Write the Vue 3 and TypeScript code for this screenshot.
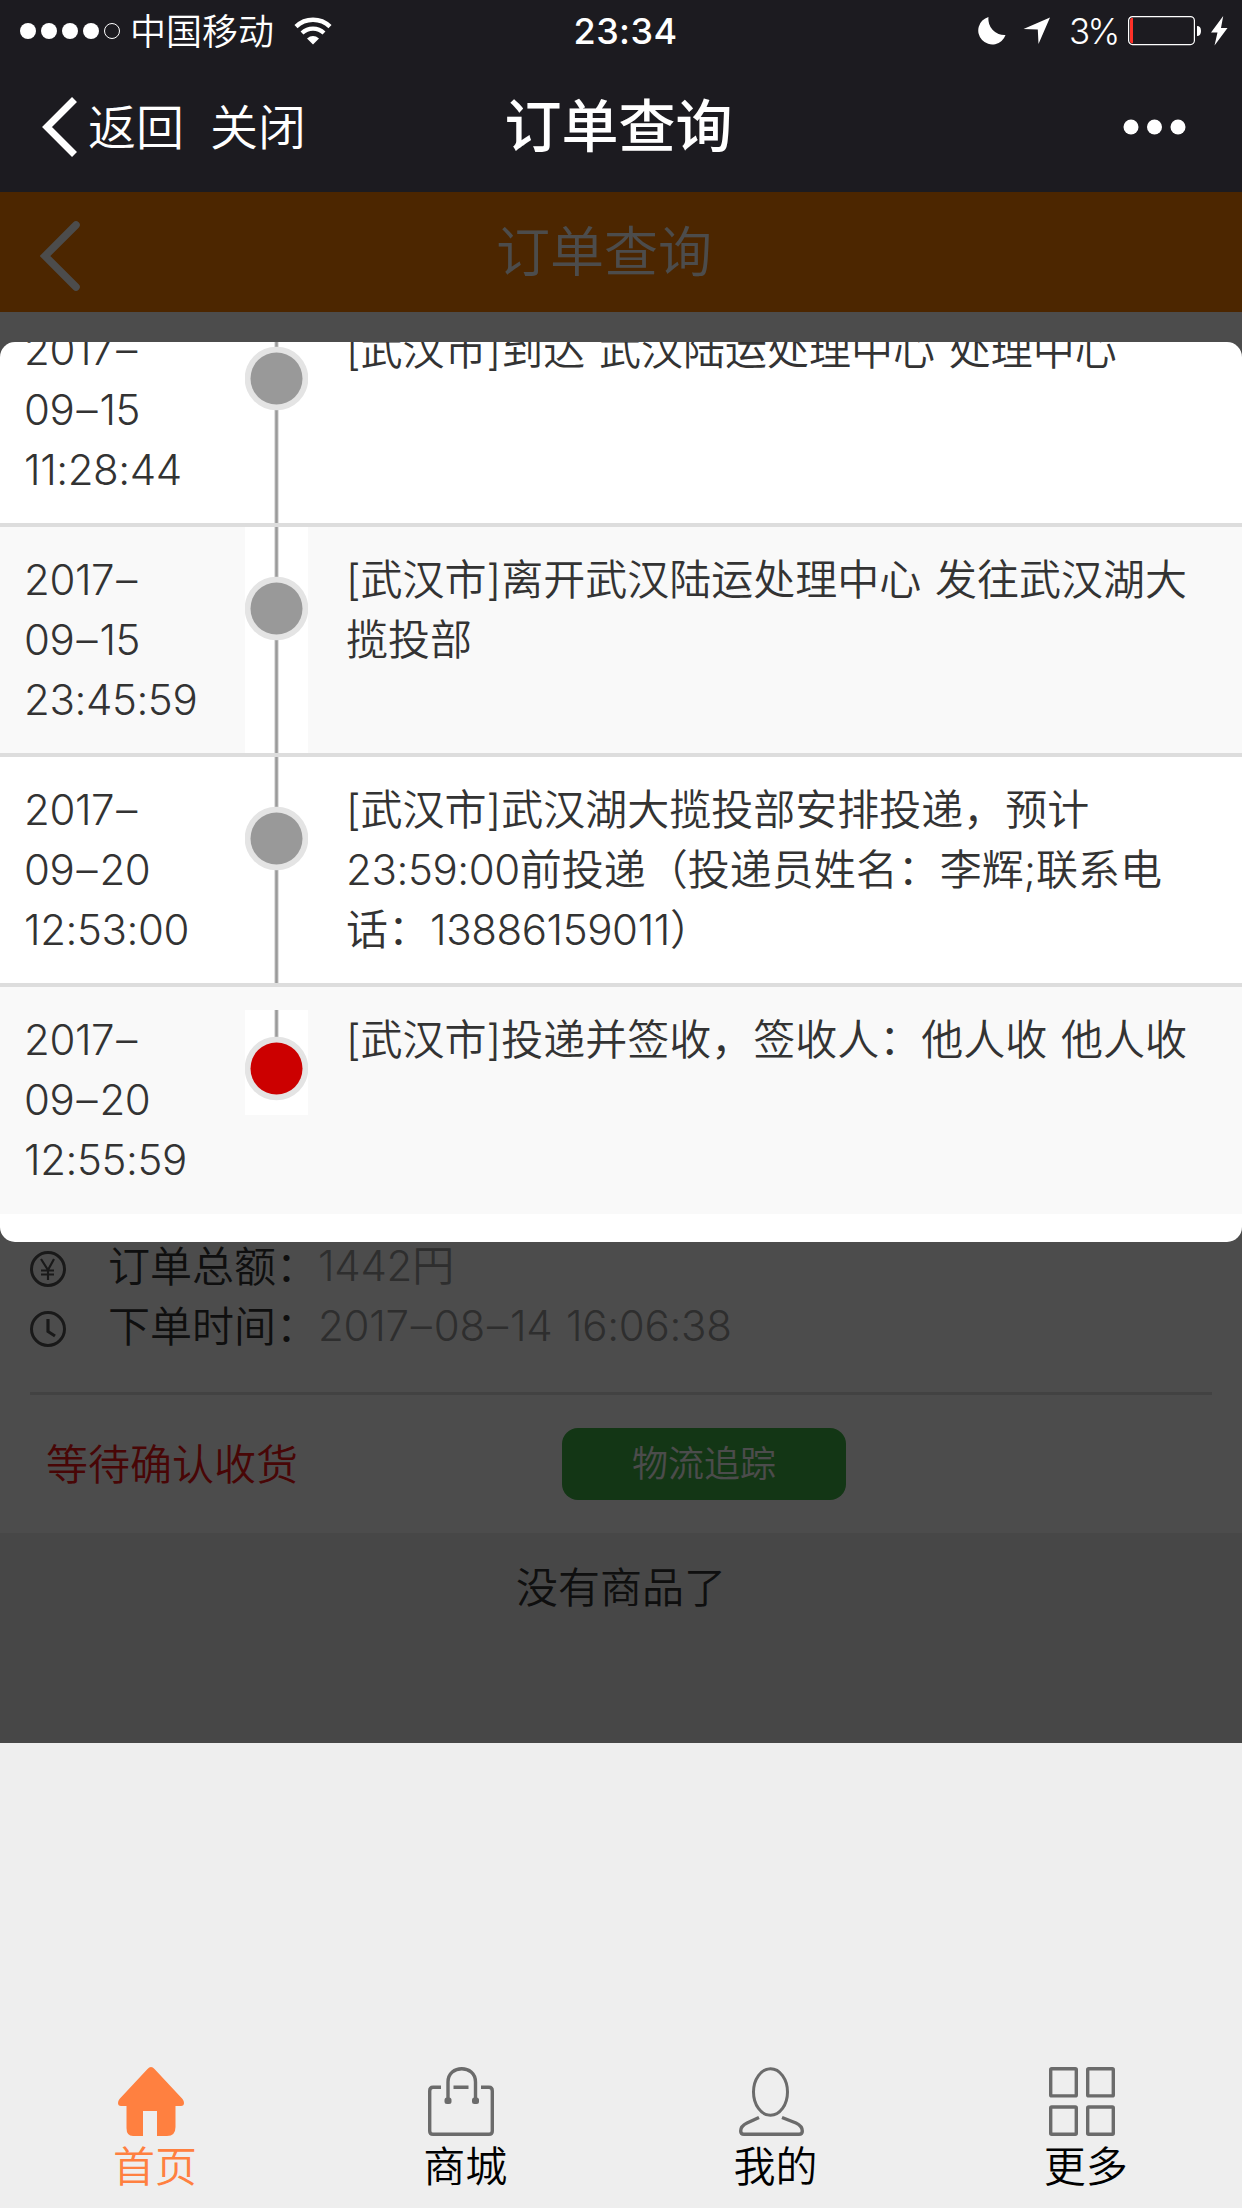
<script setup lang="ts">
interface TrackEntry {
  time: string[]
  lines: string[]
  current?: boolean
}

interface Segment {
  text: string
  kind: 'num' | 'dash' | 'plain'
}

const entries: TrackEntry[] = [
  { time: ['2017–', '09–15', '11:28:44'], lines: ['[武汉市]到达 武汉陆运处理中心 处理中心'] },
  { time: ['2017–', '09–15', '23:45:59'], lines: ['[武汉市]离开武汉陆运处理中心 发往武汉湖大', '揽投部'] },
  {
    time: ['2017–', '09–20', '12:53:00'],
    lines: ['[武汉市]武汉湖大揽投部安排投递，预计', '23:59:00前投递（投递员姓名：李辉;联系电', '话：13886159011）'],
  },
  { time: ['2017–', '09–20', '12:55:59'], lines: ['[武汉市]投递并签收，签收人：他人收 他人收'], current: true },
]

const orderTime = '2017–08–14 16:06:38'

const tabs = [
  { id: 'home', label: '首页' },
  { id: 'mall', label: '商城' },
  { id: 'mine', label: '我的' },
  { id: 'more', label: '更多' },
]

// Digits and dashes are spaced differently from the surrounding Chinese text
function segments(line: string): Segment[] {
  return line
    .split(/([0-9: ]*[0-9:]+|–)/)
    .filter((part) => part.length > 0)
    .map((part) => ({
      text: part,
      kind: part === '–' ? 'dash' : /^[0-9: ]+$/.test(part) ? 'num' : 'plain',
    }))
}
</script>

<template>
  <div class="screen">
    <header class="top">
      <div class="status">
        <div class="status-left">
          <svg class="signal" width="100" height="16" viewBox="0 0 100 16">
            <circle v-for="n in 4" :key="n" :cx="n * 21 - 13" cy="8" r="8" fill="#fff" />
            <circle cx="92" cy="8" r="7.5" fill="none" stroke="#fff" />
          </svg>
          <span class="carrier">中国移动</span>
          <svg class="wifi" width="38" height="28" viewBox="0 0 38 28">
            <path d="M2 9.6a24.5 24.5 0 0 1 34 0" fill="none" stroke="#fff" stroke-width="4.4" />
            <path d="M8 16a16 16 0 0 1 22 0" fill="none" stroke="#fff" stroke-width="4.2" />
            <path d="M13 21.400q6-4.600 12 0l-6 6z" fill="#fff" />
          </svg>
        </div>
        <span class="clock">23:34</span>
        <div class="status-right">
          <svg width="28" height="28" viewBox="0 0 28 28">
            <path d="M10.500 0A14 14 0 1 0 27.500 18A16 16 0 0 1 10.500 0z" fill="#fff" />
          </svg>
          <svg class="locate" width="28" height="28" viewBox="0 0 28 28">
            <path d="M27 .5L15.500 27 14.800 12.500.5 12z" fill="#fff" />
          </svg>
          <span class="percent">3%</span>
          <svg class="battery" width="74" height="30" viewBox="0 0 74 30">
            <rect x=".6" y=".6" width="65.800" height="28" rx="4" fill="none" stroke="#fff" stroke-width="1.200" />
            <path d="M5 2v25.200H3.500Q2 27.200 2 25V4.500Q2 2 3.500 2z" fill="#ff3128" />
            <path d="M69 10q4 0 4 5t-4 5z" fill="#fff" />
          </svg>
          <svg class="bolt" width="17" height="30" viewBox="0 0 17 30">
            <path d="M12.200 0L0 16.500h6.500L3.500 29.500 16.500 12H10z" fill="#fff" />
          </svg>
        </div>
      </div>
      <nav class="nav">
        <div class="nav-side">
          <svg width="36" height="60" viewBox="0 0 36 60">
            <path d="M32.500 2.500L5 30l27.500 27.500" fill="none" stroke="#fff" stroke-width="7" />
          </svg>
          <span class="nav-back">返回</span>
          <span class="nav-close">关闭</span>
        </div>
        <h1 class="nav-title">订单查询</h1>
        <svg class="dots" width="64" height="16" viewBox="0 0 64 16">
          <circle cx="8" cy="8" r="7.500" fill="#fff" />
          <circle cx="31.500" cy="8" r="7.500" fill="#fff" />
          <circle cx="55" cy="8" r="7.500" fill="#fff" />
        </svg>
      </nav>
    </header>

    <main class="page">
      <div class="bar">
        <svg width="40" height="72" viewBox="0 0 40 72">
          <path d="M36 5L5 36l31 31" fill="none" stroke="#fff" stroke-width="7.500" stroke-linecap="round" />
        </svg>
        <h2 class="bar-title">订单查询</h2>
      </div>
      <section class="order">
        <div class="info">
          <svg width="36" height="36" viewBox="0 0 36 36" fill="none" stroke="#555" stroke-width="3">
            <circle cx="18" cy="18" r="16.500" />
            <path d="M11 8l7 11 6-11M18 18v11M11 19.500h13M11 23.500h13" stroke-width="2.200" />
          </svg>
          <span class="info-label">订单总额：</span>
          <span class="info-value"><span class="num">1442</span>円</span>
        </div>
        <div class="info">
          <svg width="36" height="36" viewBox="0 0 36 36" fill="none" stroke="#555" stroke-width="3">
            <circle cx="18" cy="18" r="16.500" />
            <path d="M18 8v12.500l7 4.500" stroke-width="3.200" />
          </svg>
          <span class="info-label">下单时间：</span>
          <span class="info-value"><span v-for="(seg, k) in segments(orderTime)" :key="k" :class="seg.kind">{{ seg.text }}</span></span>
        </div>
        <div class="actions">
          <span class="state">等待确认收货</span>
          <button class="track-button">物流追踪</button>
        </div>
      </section>
      <p class="end">没有商品了</p>

      <div class="mask">
        <div class="dialog">
          <ul class="tracks">
            <li v-for="(entry, i) in entries" :key="i" class="track">
              <div class="time">
                <div v-for="part in entry.time" :key="part">
                  <span v-for="(seg, k) in segments(part)" :key="k" :class="seg.kind">{{ seg.text }}</span>
                </div>
              </div>
              <div class="rail" :class="{ current: entry.current }">
                <svg v-if="entry.current" width="63" height="105" viewBox="0 0 63 105">
                  <rect x="29.300" width="4.400" height="30" fill="#d4d4d4" />
                  <rect x="30.300" width="2.400" height="30" fill="#999" />
                  <circle cx="31.500" cy="58.500" r="31.800" fill="#e4e4e4" />
                  <circle cx="31.500" cy="58.500" r="26" fill="#c00" />
                </svg>
                <svg v-else width="63" height="226" viewBox="0 0 63 226">
                  <rect x="29.300" width="4.400" height="226" fill="#d4d4d4" />
                  <rect x="30.300" width="2.400" height="226" fill="#999" />
                  <circle cx="31.500" cy="81.500" r="31.800" fill="#e4e4e4" />
                  <circle cx="31.500" cy="81.500" r="26" fill="#999" />
                </svg>
              </div>
              <div class="desc">
                <div v-for="line in entry.lines" :key="line">
                  <span v-for="(seg, k) in segments(line)" :key="k" :class="seg.kind">{{ seg.text }}</span>
                </div>
              </div>
            </li>
          </ul>
        </div>
      </div>
    </main>

    <footer class="tabs">
      <a v-for="tab in tabs" :key="tab.id" class="tab" :class="{ active: tab.id === 'home' }">
        <svg v-if="tab.id === 'home'" width="66" height="69" viewBox="0 0 66 69">
          <path d="M29.500 2Q33 -2 36.500 2L64.500 32Q66 34 66 36Q66 39 63 39H57.500V60Q57.500 69 49 69H39V44H25V69H15Q8.500 69 8.500 61V39H3Q0 39 0 36Q0 34 1.500 32z" fill="#ff8040" />
        </svg>
        <svg v-else-if="tab.id === 'mall'" width="66" height="69" viewBox="0 0 66 69" fill="none" stroke="#6b6b6b" stroke-width="3.400">
          <path d="M13 20.200H5Q1.700 20.200 1.700 24V64Q1.700 67.300 5 67.300H61Q64.300 67.300 64.300 64V24Q64.300 20.200 61 20.200H53M25.500 20.200H40.500" />
          <path d="M20 33V15C20 -2.700 47.500 -2.700 47.500 15V33" />
          <rect x="16.500" y="30.500" width="7" height="6.500" rx="2.500" fill="#6b6b6b" stroke="none" />
          <rect x="44" y="30.500" width="7" height="6.500" rx="2.500" fill="#6b6b6b" stroke="none" />
        </svg>
        <svg v-else-if="tab.id === 'mine'" width="66" height="69" viewBox="0 0 66 69" fill="none" stroke="#6b6b6b" stroke-width="3.400">
          <ellipse cx="31.500" cy="25" rx="17" ry="23.300" stroke-width="3" />
          <path d="M20 50.500L8 56Q1.700 59 1.700 64Q1.700 67.300 5 67.300H60Q63.300 67.300 63.300 64Q63.300 59 57 56L43 50.500" />
        </svg>
        <svg v-else width="66" height="69" viewBox="0 0 66 69" fill="none" stroke="#6b6b6b" stroke-width="3.400">
          <rect x="1.700" y="1.700" width="25.600" height="27.200" rx="1" />
          <rect x="38.700" y="1.700" width="25.600" height="27.200" rx="1" />
          <rect x="1.700" y="40" width="25.600" height="27.200" rx="1" />
          <rect x="38.700" y="40" width="25.600" height="27.200" rx="1" />
        </svg>
        <span class="tab-label">{{ tab.label }}</span>
      </a>
    </footer>
  </div>
</template>

<style>
body {
  margin: 0;
  background: #eee;
}
</style>

<style scoped>
.screen {
  display: flex;
  flex-direction: column;
  width: 1242px;
  height: 2208px;
  overflow: hidden;
  background: #eee;
  font-family: Inter, "Noto Sans CJK SC", sans-serif;
  font-size: 42px;
  font-weight: 350;
  font-feature-settings: "calt" 0;
  line-height: 60px;
  white-space: nowrap;
}

svg {
  display: block;
  flex: none;
}

h1,
h2,
p,
ul {
  margin: 0;
  padding: 0;
}

.top {
  height: 192px;
  background: #1c1b20;
  color: #fff;
}

.status {
  display: grid;
  grid-template-columns: 1fr auto 1fr;
  align-items: center;
  height: 62px;
  padding: 0 14px 0 20px;
  font-size: 36px;
}

.status-left,
.status-right {
  display: flex;
  align-items: center;
}

.status-right {
  justify-content: flex-end;
}

.carrier {
  margin-left: 10px;
  padding-top: 1px;
}

.wifi {
  margin-left: 20px;
}

.clock {
  padding-left: 3px;
  font-weight: 500;
  letter-spacing: 0.4px;
}

.locate {
  margin-left: 17px;
}

.percent {
  width: 51px;
  margin-left: 18px;
  font-size: 35px;
  letter-spacing: -2.6px;
}

.battery {
  margin-left: 8px;
}

.bolt {
  margin-left: 9px;
}

.nav {
  display: grid;
  grid-template-columns: 1fr auto 1fr;
  align-items: center;
  height: 130px;
  padding: 0 55px 0 42px;
  font-size: 48px;
}

.nav-side {
  display: flex;
  align-items: center;
}

.nav-back {
  margin-left: 10px;
  padding-top: 2px;
}

.nav-close {
  margin-left: 26px;
  padding-top: 2px;
}

.nav-title {
  padding: 0 0 0 8px;
  font-size: 57px;
  font-weight: 500;
}

.dots {
  justify-self: end;
}

.page {
  position: relative;
  height: 1551px;
}

.bar {
  display: grid;
  grid-template-columns: 456px 1fr;
  align-items: center;
  height: 120px;
  padding-left: 40px;
  background: #ff8000;
  color: #fff;
}

.bar svg {
  margin-top: 8px;
}

.bar-title {
  padding-top: 1px;
  font-size: 54px;
  font-weight: inherit;
}

.order {
  display: flex;
  flex-direction: column;
  height: 297px;
  padding: 924px 30px 0;
  background: #fff;
}

.info {
  display: flex;
  align-items: center;
  height: 60px;
}

.info svg {
  margin-top: 6px;
}

.info-label {
  margin-left: 42px;
  padding-top: 1px;
  color: #333;
}

.info-value {
  color: #999;
  word-spacing: 2px;
}

.info-value .num {
  letter-spacing: -0.25px;
}

.actions {
  display: flex;
  align-items: center;
  height: 138px;
  margin-top: 36px;
  border-top: 3px solid #ddd;
}

.state {
  width: 516px;
  padding: 1px 0 0 16px;
  color: #f01414;
}

.track-button {
  width: 284px;
  height: 72px;
  padding: 0;
  border: 0;
  border-radius: 16px;
  background: #40b446;
  color: #fff;
  font: inherit;
  font-size: 36px;
}

.end {
  padding-top: 25px;
  color: #333;
  text-align: center;
}

.mask {
  position: absolute;
  inset: 0;
  padding-top: 150px;
  background: rgba(0, 0, 0, 0.7);
}

.dialog {
  height: 900px;
  overflow: hidden;
  border-radius: 15px;
  background: #fff;
  color: #333;
}

.tracks {
  margin-top: -45px;
  list-style: none;
}

.track {
  display: flex;
  height: 226px;
}

.track + .track {
  border-top: 4px solid #ddd;
}

.track:last-child {
  height: 227px;
}

.track:nth-child(even) {
  background: #f9f9f9;
}

.time {
  width: 221px;
  padding: 23px 0 0 24px;
}

.rail {
  width: 63px;
  background: #fff;
}

.rail.current {
  height: 105px;
  margin-top: 23px;
}

.desc {
  padding: 23px 0 0 38px;
  word-spacing: 2px;
}

.num {
  letter-spacing: -0.4px;
}

.dash {
  margin: 0 2px;
}

.tabs {
  display: flex;
  flex: 1;
  align-items: flex-end;
  padding: 0 1px 11px 0;
}

.tab {
  display: flex;
  flex: 1;
  flex-direction: column;
  align-items: center;
  color: #000;
}

.tab svg {
  margin-right: 8px;
}

.tab-label {
  line-height: 61px;
}

.active {
  color: #ff8040;
}
</style>
